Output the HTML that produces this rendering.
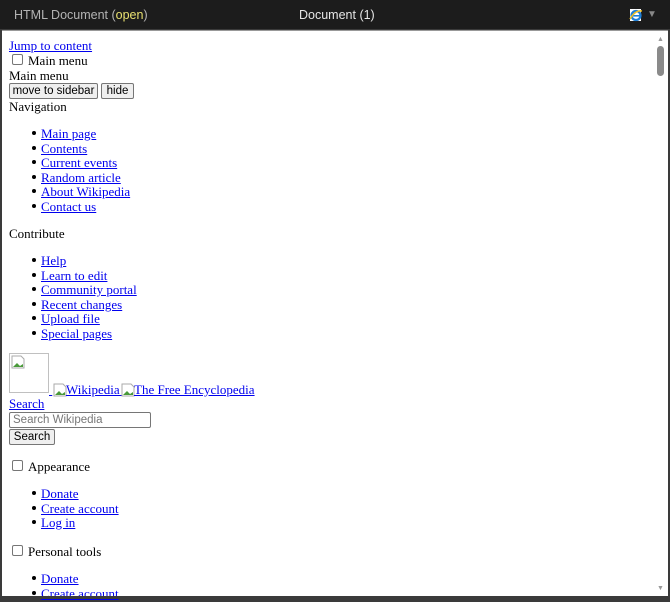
<!DOCTYPE html>
<html><head><meta charset="utf-8">
<style>
*{margin:0;padding:0;box-sizing:border-box}
body{width:670px;height:599px;overflow:hidden;background:#3a3a3a;font-family:"Liberation Serif",serif;font-size:13px;position:relative}
.hdr{position:absolute;left:0;top:0;width:670px;height:29px;background:#1c1c1c;color:#c8c8c8;font-family:"Liberation Sans",sans-serif;font-size:12.5px}
.hdr .l{position:absolute;left:14px;top:8px;color:#b4b4b4}
.hdr .l span{color:#e8e070}
.hdr .c{position:absolute;left:299px;top:8px;color:#e6e6e6}
.pane{position:absolute;left:2px;top:30px;width:666px;height:566px;background:#fff;border-top:1px solid #999}
.t{position:absolute;line-height:16px;white-space:nowrap;color:#000}
a{color:#00e;text-decoration:underline}
.b{position:absolute;left:32px;width:4px;height:4px;border-radius:50%;background:#000}
.cb{position:absolute;width:11px;height:11px;border:1px solid #767676;border-radius:2px;background:#fff}
.btn{position:absolute;height:16px;border:1px solid #767676;border-radius:2px;background:#efefef;font-family:"Liberation Sans",sans-serif;font-size:11.5px;line-height:14px;text-align:center;color:#000}
.sb{position:absolute;left:655px;top:31px;width:13px;height:565px;background:#fff}
.thumb{position:absolute;left:657px;top:46px;width:7px;height:30px;border-radius:4px;background:#8a8a8a}
</style></head><body>
<div class="hdr"><div class="l">HTML Document (<span>open</span>)</div><div class="c">Document (1)</div>
<svg style="position:absolute;left:629px;top:8px" width="14" height="14" viewBox="0 0 14 14"><rect x="1" y="1" width="11" height="12" fill="#fff"/><circle cx="7" cy="7.5" r="4.5" fill="none" stroke="#1e7fd6" stroke-width="2.2"/><rect x="3" y="7" width="8" height="1.6" fill="#1e7fd6"/><path d="M1 11 Q6 2 13 3" stroke="#f0c020" stroke-width="1.5" fill="none"/></svg>
<div style="position:absolute;left:647px;top:9px;color:#888;font-size:10px">▼</div></div>
<div class="pane"></div>
<div class="sb"></div>
<div style="position:absolute;left:657px;top:35px;color:#999;font-size:7px">▲</div>
<div class="thumb"></div>
<div style="position:absolute;left:657px;top:584px;color:#999;font-size:7px">▼</div>

<div class="t" style="left:9px;top:38px"><a>Jump to content</a></div>
<div class="cb" style="left:12px;top:54px"></div><div class="t" style="left:28px;top:53px">Main menu</div>
<div class="t" style="left:9px;top:68px">Main menu</div>
<div class="btn" style="left:9px;top:83px;width:89px">move to sidebar</div>
<div class="btn" style="left:101px;top:83px;width:33px">hide</div>
<div class="t" style="left:9px;top:99px">Navigation</div>

<div class="b" style="top:131px"></div><div class="t" style="left:41px;top:126px"><a>Main page</a></div>
<div class="b" style="top:146px"></div><div class="t" style="left:41px;top:141px"><a>Contents</a></div>
<div class="b" style="top:160px"></div><div class="t" style="left:41px;top:155px"><a>Current events</a></div>
<div class="b" style="top:175px"></div><div class="t" style="left:41px;top:170px"><a>Random article</a></div>
<div class="b" style="top:189px"></div><div class="t" style="left:41px;top:184px"><a>About Wikipedia</a></div>
<div class="b" style="top:204px"></div><div class="t" style="left:41px;top:199px"><a>Contact us</a></div>
<div class="t" style="left:9px;top:226px">Contribute</div>
<div class="b" style="top:258px"></div><div class="t" style="left:41px;top:253px"><a>Help</a></div>
<div class="b" style="top:273px"></div><div class="t" style="left:41px;top:268px"><a>Learn to edit</a></div>
<div class="b" style="top:287px"></div><div class="t" style="left:41px;top:282px"><a>Community portal</a></div>
<div class="b" style="top:302px"></div><div class="t" style="left:41px;top:297px"><a>Recent changes</a></div>
<div class="b" style="top:316px"></div><div class="t" style="left:41px;top:311px"><a>Upload file</a></div>
<div class="b" style="top:331px"></div><div class="t" style="left:41px;top:326px"><a>Special pages</a></div>

<div style="position:absolute;left:9px;top:353px;width:40px;height:40px;border:1px solid #c0c0c0"></div>
<svg style="position:absolute;left:11px;top:355px" width="14" height="14"><path d="M1 1h9l3 3v9H1z" fill="#fff" stroke="#aaa"/><path d="M2 12l4-4 3 3 3-2v3H2z" fill="#4a9a3a"/></svg>
<div class="t" style="left:49px;top:382px"><a>&nbsp;</a></div>
<svg style="position:absolute;left:53px;top:383px" width="14" height="14"><path d="M1 1h9l3 3v9H1z" fill="#fff" stroke="#aaa"/><path d="M2 12l4-4 3 3 3-2v3H2z" fill="#4a9a3a"/></svg>
<div class="t" style="left:66px;top:382px"><a>Wikipedia&nbsp;</a></div>
<svg style="position:absolute;left:121px;top:383px" width="14" height="14"><path d="M1 1h9l3 3v9H1z" fill="#fff" stroke="#aaa"/><path d="M2 12l4-4 3 3 3-2v3H2z" fill="#4a9a3a"/></svg>
<div class="t" style="left:134px;top:382px"><a>The Free Encyclopedia</a></div>
<div class="t" style="left:9px;top:396px"><a>Search</a></div>
<div style="position:absolute;left:9px;top:412px;width:142px;height:16px;border:1px solid #767676;border-radius:2px;font-family:'Liberation Sans',sans-serif;font-size:11.5px;color:#777;padding-left:3px;line-height:14px">Search Wikipedia</div>
<div class="btn" style="left:9px;top:429px;width:46px">Search</div>

<div class="cb" style="left:12px;top:460px"></div><div class="t" style="left:28px;top:459px">Appearance</div>
<div class="b" style="top:491px"></div><div class="t" style="left:41px;top:486px"><a>Donate</a></div>
<div class="b" style="top:506px"></div><div class="t" style="left:41px;top:501px"><a>Create account</a></div>
<div class="b" style="top:520px"></div><div class="t" style="left:41px;top:515px"><a>Log in</a></div>
<div class="cb" style="left:12px;top:545px"></div><div class="t" style="left:28px;top:544px">Personal tools</div>
<div class="b" style="top:576px"></div><div class="t" style="left:41px;top:571px"><a>Donate</a></div>
<div class="b" style="top:591px"></div><div class="t" style="left:41px;top:586px"><a>Create account</a></div>
<div style="position:absolute;left:0;top:596px;width:670px;height:3px;background:#3a3a3a"></div>
</body></html>
